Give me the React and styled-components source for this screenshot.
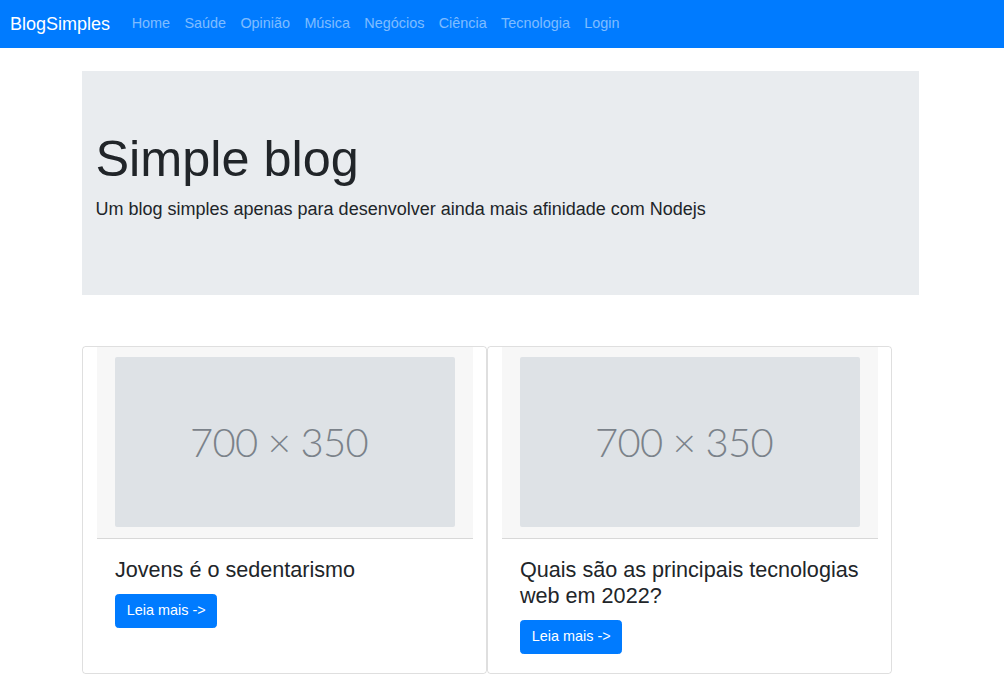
import React from 'react';
import styled, { createGlobalStyle } from 'styled-components';

const GlobalStyle = createGlobalStyle`
  * {
    box-sizing: border-box;
  }

  body {
    margin: 0;
    background: #fff;
    color: #212529;
    font-family: "Liberation Sans", Arial, sans-serif;
    font-size: 14.4px;
    line-height: 1.5;
  }
`;

const Navbar = styled.nav`
  background-color: #007bff;
  height: 48px;
  display: flex;
  align-items: center;
  padding: 0 10px;
`;

const Brand = styled.a`
  color: #fff;
  font-size: 18px;
  line-height: 27px;
  margin-right: 14.4px;
  text-decoration: none;
`;

const NavList = styled.div`
  display: flex;
`;

const NavLink = styled.a`
  color: rgba(255, 255, 255, 0.5);
  font-size: 14.4px;
  padding: 0 7.2px;
  text-decoration: none;
`;

const Main = styled.main`
  width: 837px;
  margin: 23px 0 0 82px;
`;

const Jumbotron = styled.section`
  background-color: #e9ecef;
  padding: 57.6px 13.5px;
  margin-bottom: 51px;
`;

const Title = styled.h1`
  font-size: 50.4px;
  font-weight: 300;
  line-height: 1.2;
  margin: 0 0 7.2px;
`;

const Lead = styled.p`
  font-size: 18px;
  line-height: 1.5;
  margin: 0 0 14.4px;
`;

const CardRow = styled.div`
  display: flex;
`;

const Card = styled.article`
  width: 405px;
  border: 1px solid rgba(0, 0, 0, 0.125);
  border-radius: 3.6px;
  padding: 0 13px 0 14px;
  display: flex;
  flex-direction: column;
`;

const CardHeader = styled.div`
  background-color: #f7f7f7;
  border-bottom: 1px solid rgba(0, 0, 0, 0.125);
  padding: 10px 18px 11px;
`;

const Placeholder = styled.div`
  height: 170px;
  background-color: #dee2e6;
  border-radius: 2px;
  display: flex;
  align-items: center;
  justify-content: center;
  padding-right: 12px;
  color: #7b828a;
  font-family: Lato, "Open Sans", sans-serif;
  font-weight: 300;
  font-size: 40px;
  letter-spacing: -0.7px;
`;

const CardBody = styled.div`
  padding: 18px 18px 19px;
  flex: 1;
`;

const CardTitle = styled.h4`
  font-size: 21.6px;
  font-weight: 400;
  line-height: 1.2;
  margin: 0 0 10.8px;
`;

const Button = styled.a`
  display: inline-block;
  background-color: #007bff;
  border: 1px solid #007bff;
  border-radius: 3.6px;
  color: #fff;
  font-size: 14.4px;
  line-height: 21.6px;
  padding: 5.4px 10.8px;
  text-decoration: none;
`;

const links = ['Home', 'Saúde', 'Opinião', 'Música', 'Negócios', 'Ciência', 'Tecnologia', 'Login'];

const posts = [
  { id: 1, title: 'Jovens é o sedentarismo' },
  { id: 2, title: 'Quais são as principais tecnologias web em 2022?' },
];

const App = () => (
  <>
    <GlobalStyle />
    <Navbar>
      <Brand href="#">BlogSimples</Brand>
      <NavList>
        {links.map((link) => (
          <NavLink key={link} href="#">{link}</NavLink>
        ))}
      </NavList>
    </Navbar>
    <Main>
      <Jumbotron>
        <Title>Simple blog</Title>
        <Lead>Um blog simples apenas para desenvolver ainda mais afinidade com Nodejs</Lead>
      </Jumbotron>
      <CardRow>
        {posts.map((post) => (
          <Card key={post.id}>
            <CardHeader>
              <Placeholder>700 × 350</Placeholder>
            </CardHeader>
            <CardBody>
              <CardTitle>{post.title}</CardTitle>
              <Button href="#">Leia mais -&gt;</Button>
            </CardBody>
          </Card>
        ))}
      </CardRow>
    </Main>
  </>
);

export default App;
